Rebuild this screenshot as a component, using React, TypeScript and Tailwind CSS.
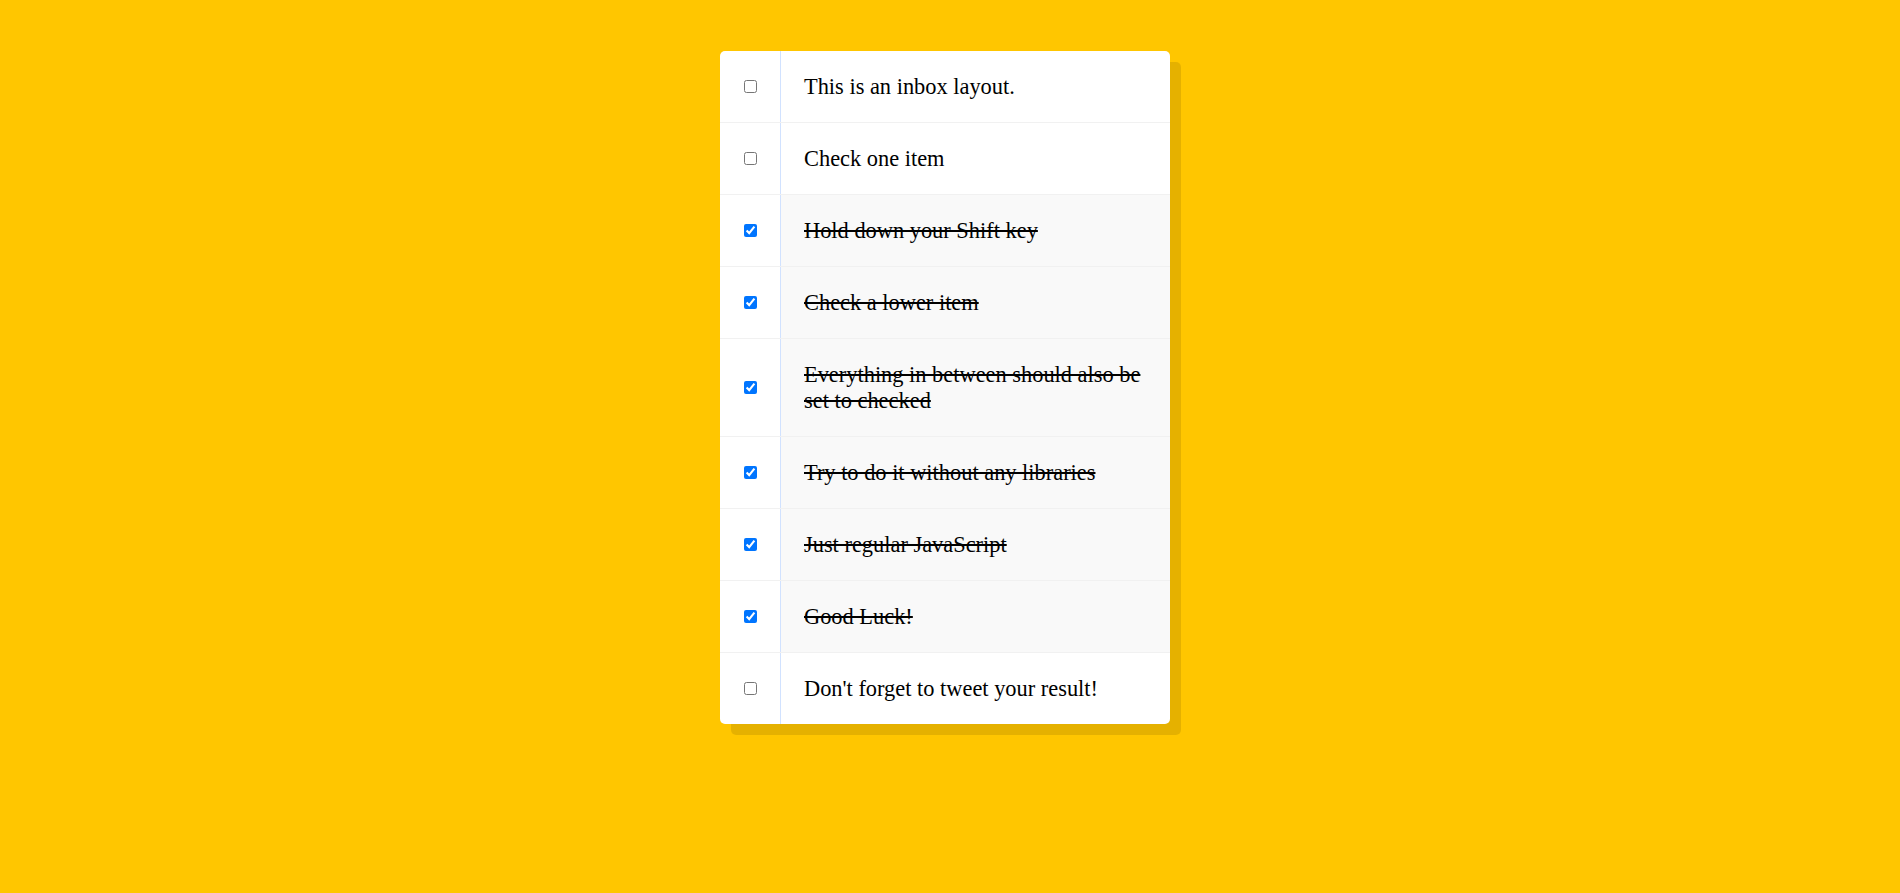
import React, { useRef, useState } from 'react';

const items = [
  'This is an inbox layout.',
  'Check one item',
  'Hold down your Shift key',
  'Check a lower item',
  'Everything in between should also be set to checked',
  'Try to do it without any libraries',
  'Just regular JavaScript',
  'Good Luck!',
  "Don't forget to tweet your result!",
];

export default function App() {
  const [checked, setChecked] = useState<boolean[]>([false, false, true, true, true, true, true, true, false]);
  const lastChecked = useRef<number | null>(null);

  const handleClick = (i: number, e: React.MouseEvent<HTMLInputElement>) => {
    const next = [...checked];
    next[i] = e.currentTarget.checked;
    // shift-click checks everything between the last checked box and this one
    if (e.shiftKey && next[i] && lastChecked.current !== null) {
      const start = Math.min(i, lastChecked.current);
      const end = Math.max(i, lastChecked.current);
      for (let j = start; j <= end; j++) next[j] = true;
    }
    if (next[i]) lastChecked.current = i;
    setChecked(next);
  };

  return (
    <div className="min-h-screen bg-[#ffc600] pt-[51px] pr-[10px]" style={{ fontFamily: '"Liberation Serif", "Times New Roman", serif' }}>
      <div className="mx-auto w-[450px] bg-white rounded-[5px] shadow-[11px_11px_0_rgba(0,0,0,0.1)]">
        {items.map((text, i) => (
          <div
            key={i}
            className={`flex items-center ${i < items.length - 1 ? 'border-b border-[#f1f1f1]' : ''}`}
          >
            <div className="w-[60px] shrink-0 flex items-center justify-center self-stretch">
              <input
                type="checkbox"
                className="m-0 w-[13px] h-[13px]"
                checked={checked[i]}
                onChange={() => {}}
                onClick={e => handleClick(i, e)}
              />
            </div>
            <p
              className={`flex-1 m-0 px-[23px] py-[22.5px] text-[22.4px] leading-[26px] text-black border-l border-[#d1e2ff] transition-colors ${
                checked[i] ? 'bg-[#f9f9f9] line-through' : ''
              }`}
            >
              {text}
            </p>
          </div>
        ))}
      </div>
    </div>
  );
}
